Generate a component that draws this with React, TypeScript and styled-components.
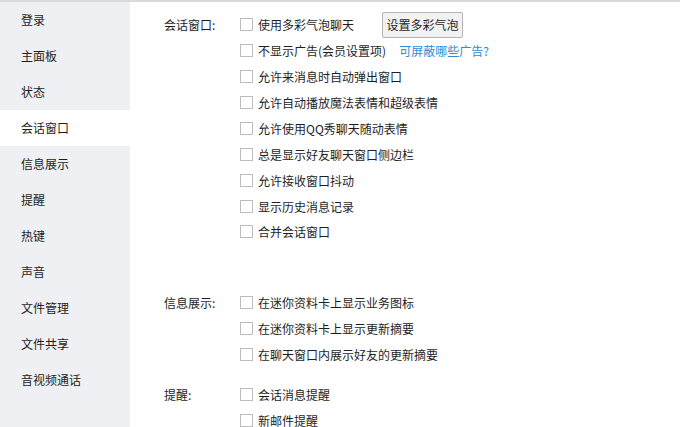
import React from "react";
import styled, { createGlobalStyle } from "styled-components";

const Global = createGlobalStyle`
  html, body { margin: 0; padding: 0; background: #fff; overflow: hidden; }
  body { font-family: "Noto Sans CJK SC", "Noto Sans", sans-serif; font-size: 12px; color: #222; }
`;

const Page = styled.div`
  width: 680px;
  height: 427px;
  border-top: 2px solid #dadada;
  box-sizing: border-box;
  display: flex;
  overflow: hidden;
`;

const Sidebar = styled.nav`
  width: 130px;
  flex-shrink: 0;
  background: #eff0f3;
  display: flex;
  flex-direction: column;
`;

const NavItem = styled.div<{ $active?: boolean }>`
  height: 36px;
  line-height: 36px;
  padding-left: 21px;
  font-size: 12px;
  color: #1e1e1e;
  background: ${(p) => (p.$active ? "#ffffff" : "transparent")};
`;

const Content = styled.main`
  flex: 1;
  padding: 10px 0 0 34px;
  display: flex;
  flex-direction: column;
`;

const Section = styled.section<{ $gapAfter: number }>`
  display: grid;
  grid-template-columns: 76px 1fr;
  margin-bottom: ${(p) => p.$gapAfter}px;
`;

const Label = styled.div`
  height: 26px;
  line-height: 26px;
  color: #1e1e1e;
`;

const Options = styled.div`
  display: flex;
  flex-direction: column;
`;

const Row = styled.div`
  height: 25.875px;
  display: flex;
  align-items: center;
`;

const Box = styled.span`
  width: 11px;
  height: 11px;
  border: 1px solid #bdbdbd;
  background: #fff;
  margin-right: 5px;
  flex-shrink: 0;
`;

const OptText = styled.span`
  color: #1e1e1e;
  white-space: nowrap;
`;

const Button = styled.button`
  margin-left: 28px;
  height: 26px;
  width: 81px;
  padding: 0;
  border: 1px solid #b4b4b4;
  border-radius: 2px;
  background: #f2f2f2;
  font-family: inherit;
  font-size: 12px;
  color: #1e1e1e;
`;

const Link = styled.a`
  margin-left: 13px;
  color: #2a8bd8;
  text-decoration: none;
  white-space: nowrap;
`;

const nav = ["登录", "主面板", "状态", "会话窗口", "信息展示", "提醒", "热键", "声音", "文件管理", "文件共享", "音视频通话"];

type Opt = { text: string; extra?: React.ReactNode };

const sections: { label: string; gap: number; opts: Opt[] }[] = [
  {
    label: "会话窗口:",
    gap: 45,
    opts: [
      { text: "使用多彩气泡聊天", extra: <Button>设置多彩气泡</Button> },
      { text: "不显示广告(会员设置项)", extra: <Link href="#">可屏蔽哪些广告?</Link> },
      { text: "允许来消息时自动弹出窗口" },
      { text: "允许自动播放魔法表情和超级表情" },
      { text: "允许使用QQ秀聊天随动表情" },
      { text: "总是显示好友聊天窗口侧边栏" },
      { text: "允许接收窗口抖动" },
      { text: "显示历史消息记录" },
      { text: "合并会话窗口" },
    ],
  },
  {
    label: "信息展示:",
    gap: 14.5,
    opts: [
      { text: "在迷你资料卡上显示业务图标" },
      { text: "在迷你资料卡上显示更新摘要" },
      { text: "在聊天窗口内展示好友的更新摘要" },
    ],
  },
  {
    label: "提醒:",
    gap: 0,
    opts: [{ text: "会话消息提醒" }, { text: "新邮件提醒" }],
  },
];

export default function App() {
  return (
    <>
      <Global />
      <Page>
        <Sidebar>
          {nav.map((n) => (
            <NavItem key={n} $active={n === "会话窗口"}>
              {n}
            </NavItem>
          ))}
        </Sidebar>
        <Content>
          {sections.map((s) => (
            <Section key={s.label} $gapAfter={s.gap}>
              <Label>{s.label}</Label>
              <Options>
                {s.opts.map((o) => (
                  <Row key={o.text}>
                    <Box />
                    <OptText>{o.text}</OptText>
                    {o.extra}
                  </Row>
                ))}
              </Options>
            </Section>
          ))}
        </Content>
      </Page>
    </>
  );
}
